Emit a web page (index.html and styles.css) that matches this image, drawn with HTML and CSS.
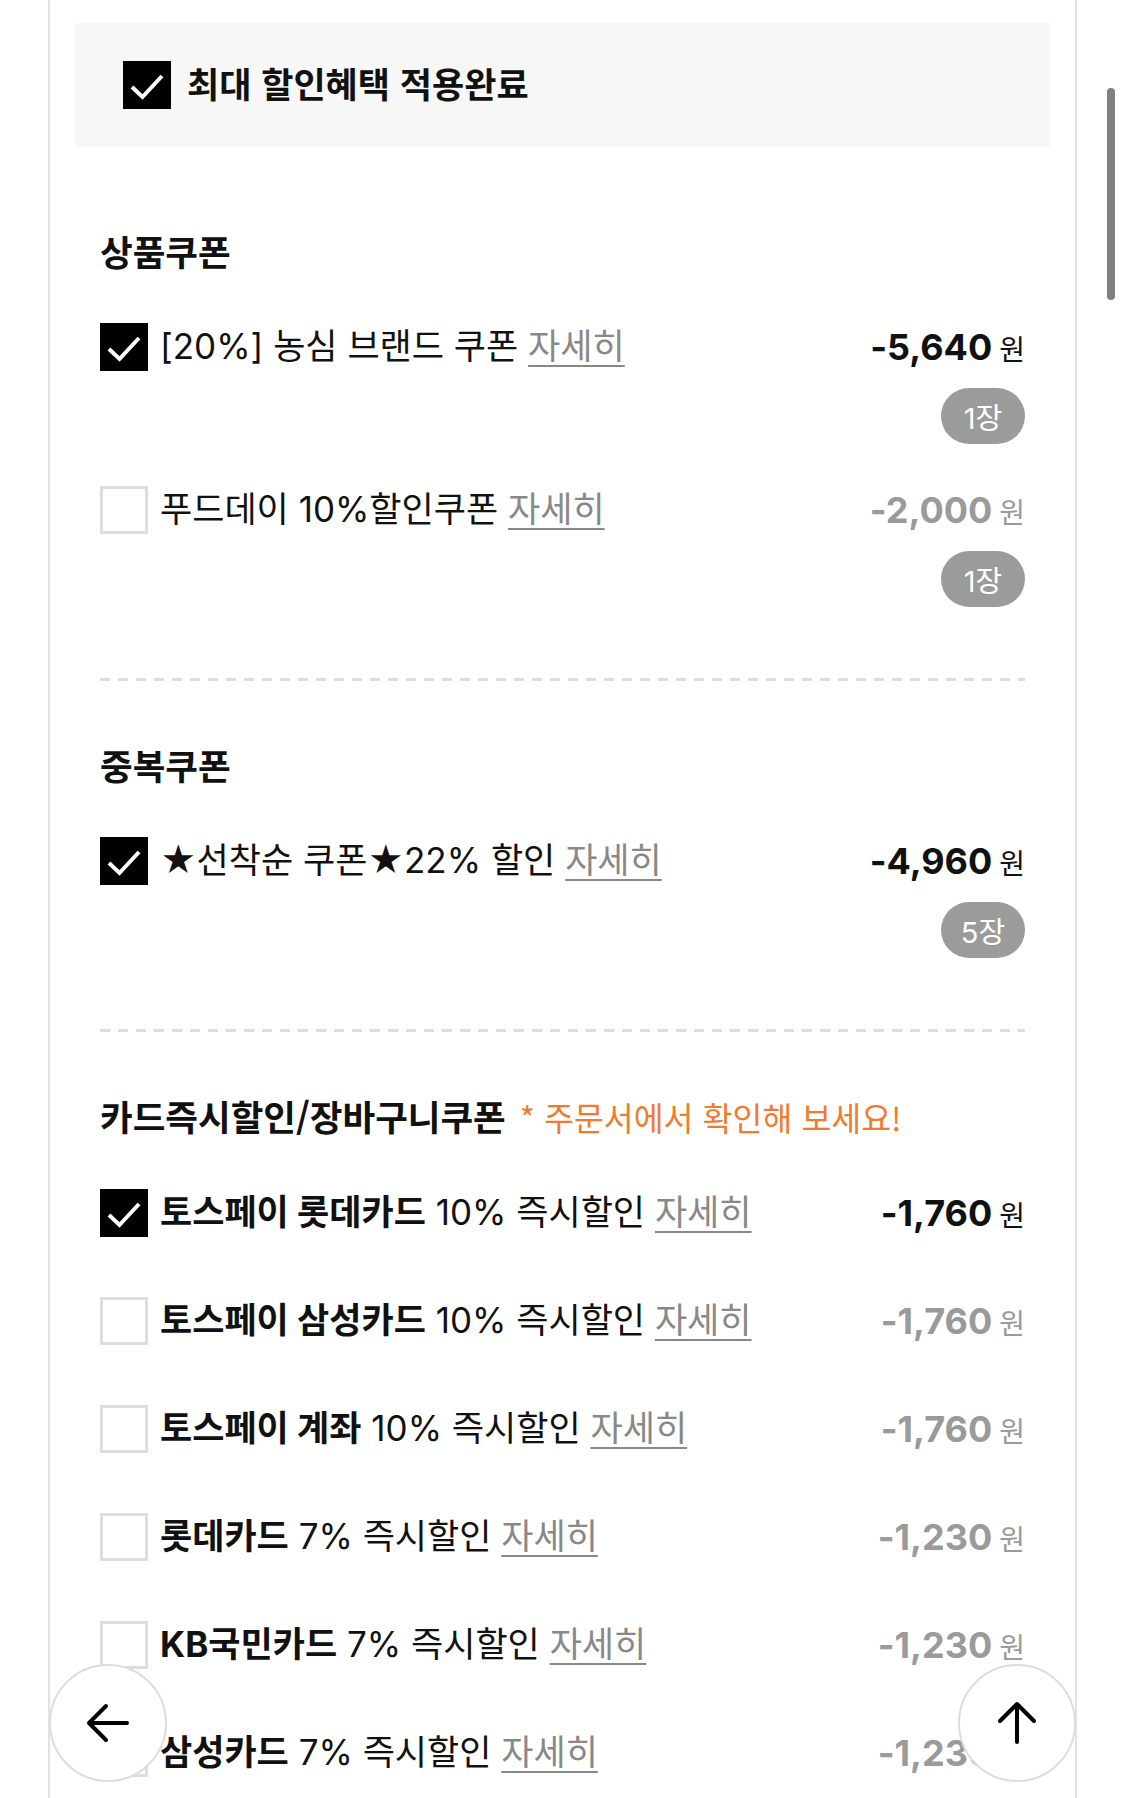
FILE: index.html
```html
<!DOCTYPE html>
<html lang="ko">
<head>
    <meta charset="UTF-8">
    <meta name="viewport" content="width=device-width, initial-scale=1.0">
    <title>할인 쿠폰 적용</title>
    <link rel="stylesheet" href="styles.css">
</head>
<body>
    <div class="panel">
        <div class="max-box">
            <span class="check on">
                <svg width="42" height="42" viewBox="0 0 42 42"><path d="M6 23 L16.5 33 L36 12" fill="none" stroke="#fff" stroke-width="4"/></svg>
            </span>
            <span class="max-label">최대 할인혜택 적용완료</span>
        </div>

        <!-- 상품쿠폰 -->
        <section class="group">
            <h2 class="group-title">상품쿠폰</h2>
            <div class="coupon">
                <div class="row">
                    <span class="check on">
                        <svg width="42" height="42" viewBox="0 0 42 42"><path d="M6 23 L16.5 33 L36 12" fill="none" stroke="#fff" stroke-width="4"/></svg>
                    </span>
                    <span class="name">[20%] 농심 브랜드 쿠폰 <a class="more">자세히</a></span>
                    <span class="price"><b>-5,640</b>원</span>
                </div>
                <span class="count">1장</span>
            </div>
            <div class="coupon">
                <div class="row">
                    <span class="check"></span>
                    <span class="name">푸드데이 10%할인쿠폰 <a class="more">자세히</a></span>
                    <span class="price off"><b>-2,000</b>원</span>
                </div>
                <span class="count">1장</span>
            </div>
        </section>

        <div class="dash"></div>

        <!-- 중복쿠폰 -->
        <section class="group">
            <h2 class="group-title">중복쿠폰</h2>
            <div class="coupon">
                <div class="row">
                    <span class="check on">
                        <svg width="42" height="42" viewBox="0 0 42 42"><path d="M6 23 L16.5 33 L36 12" fill="none" stroke="#fff" stroke-width="4"/></svg>
                    </span>
                    <span class="name">★선착순 쿠폰★22% 할인 <a class="more">자세히</a></span>
                    <span class="price"><b>-4,960</b>원</span>
                </div>
                <span class="count">5장</span>
            </div>
        </section>

        <div class="dash"></div>

        <!-- 카드즉시할인 -->
        <section class="group cards">
            <h2 class="group-title">카드즉시할인/장바구니쿠폰 <span class="note">* 주문서에서 확인해 보세요!</span></h2>
            <div class="row">
                <span class="check on">
                    <svg width="42" height="42" viewBox="0 0 42 42"><path d="M6 23 L16.5 33 L36 12" fill="none" stroke="#fff" stroke-width="4"/></svg>
                </span>
                <span class="name"><b>토스페이 롯데카드</b> 10% 즉시할인 <a class="more">자세히</a></span>
                <span class="price"><b>-1,760</b>원</span>
            </div>
            <div class="row">
                <span class="check"></span>
                <span class="name"><b>토스페이 삼성카드</b> 10% 즉시할인 <a class="more">자세히</a></span>
                <span class="price off"><b>-1,760</b>원</span>
            </div>
            <div class="row">
                <span class="check"></span>
                <span class="name"><b>토스페이 계좌</b> 10% 즉시할인 <a class="more">자세히</a></span>
                <span class="price off"><b>-1,760</b>원</span>
            </div>
            <div class="row">
                <span class="check"></span>
                <span class="name"><b>롯데카드</b> 7% 즉시할인 <a class="more">자세히</a></span>
                <span class="price off"><b>-1,230</b>원</span>
            </div>
            <div class="row">
                <span class="check"></span>
                <span class="name"><b>KB국민카드</b> 7% 즉시할인 <a class="more">자세히</a></span>
                <span class="price off"><b>-1,230</b>원</span>
            </div>
            <div class="row">
                <span class="check"></span>
                <span class="name"><b>삼성카드</b> 7% 즉시할인 <a class="more">자세히</a></span>
                <span class="price off"><b>-1,230</b>원</span>
            </div>
        </section>
    </div>

    <button class="float back" aria-label="뒤로">
        <svg width="48" height="48" viewBox="0 0 48 48"><path d="M43 24 H5 M22 7 L5 24 L22 41" fill="none" stroke="#000" stroke-width="4" stroke-linecap="round" stroke-linejoin="round"/></svg>
    </button>
    <button class="float top" aria-label="맨 위로">
        <svg width="48" height="48" viewBox="0 0 48 48"><path d="M24 43 V5 M7 22 L24 5 L41 22" fill="none" stroke="#000" stroke-width="4" stroke-linecap="round" stroke-linejoin="round"/></svg>
    </button>

    <div class="scroll-thumb"></div>
</body>
</html>
```

FILE: styles.css
```css
* {
    margin: 0;
    padding: 0;
    box-sizing: border-box;
}

body {
    font-family: "Inter", "Noto Sans CJK KR", sans-serif;
    background-color: #fff;
    color: #111;
    width: 1125px;
    height: 1798px;
    overflow: hidden;
}

.panel {
    margin-left: 48px;
    width: 1029px;
    min-height: 1798px;
    border-left: 2px solid #e2e2e2;
    border-right: 2px solid #e2e2e2;
    padding: 23px 25px 0;
}

/* top banner */
.max-box {
    height: 124px;
    background-color: #f7f7f7;
    display: flex;
    align-items: center;
    gap: 4px;
    padding-left: 48px;
    margin-bottom: 20px;
}

.max-label {
    font-family: "Noto Sans CJK KR", sans-serif;
    font-size: 35px;
    font-weight: 700;
    margin-top: -6px;
}

/* sections */
.group {
    padding: 59px 25px 71px;
}

.group-title {
    font-family: "Noto Sans CJK KR", sans-serif;
    font-size: 35.5px;
    font-weight: 700;
    line-height: 50px;
    margin-bottom: 47px;
    white-space: nowrap;
}

.note {
    color: #f07b2f;
    font-size: 32.5px;
    font-weight: 400;
    margin-left: 4px;
}

.dash {
    height: 3px;
    margin: 0 25px;
    background: repeating-linear-gradient(to right, #ddd 0 10px, transparent 10px 18px);
}

/* rows */
.coupon {
    display: flex;
    flex-direction: column;
}

.coupon + .coupon {
    margin-top: 42px;
}

.row {
    display: flex;
    align-items: center;
    height: 48px;
}

.cards .row + .row {
    margin-top: 60px;
}

.check {
    width: 48px;
    height: 48px;
    flex-shrink: 0;
    border: 3px solid #ddd;
    background-color: #fff;
    margin-right: 12px;
    display: flex;
    align-items: center;
    justify-content: center;
}

.check.on {
    background-color: #000;
    border-color: #000;
}

.name {
    flex: 1;
    font-size: 35px;
    line-height: 48px;
    white-space: nowrap;
    margin-top: -2px;
}

.name b {
    font-weight: 700;
}

.more {
    color: #888;
    text-decoration: underline;
    text-decoration-thickness: 2px;
    text-underline-offset: 6px;
}

.price {
    font-family: "Noto Sans CJK KR", sans-serif;
    font-size: 28px;
    color: #111;
    white-space: nowrap;
}

.price b {
    font-family: "Inter", sans-serif;
    font-size: 36px;
    font-weight: 700;
    margin-right: 7px;
}

.price.off {
    color: #9a9a9a;
}

.count {
    align-self: flex-end;
    margin-top: 17px;
    height: 56px;
    min-width: 84px;
    padding: 0 14px;
    border-radius: 28px;
    background-color: #9b9b9b;
    color: #fff;
    font-size: 29px;
    display: flex;
    align-items: center;
    justify-content: center;
}

/* floating buttons */
.float {
    position: fixed;
    top: 1664px;
    width: 118px;
    height: 118px;
    border-radius: 50%;
    border: 2px solid #ddd;
    background-color: #fff;
    display: flex;
    align-items: center;
    justify-content: center;
    cursor: pointer;
}

.float.back {
    left: 49px;
}

.float.top {
    left: 958px;
}

.scroll-thumb {
    position: fixed;
    left: 1107px;
    top: 88px;
    width: 8px;
    height: 212px;
    border-radius: 4px;
    background-color: #808080;
}
```
